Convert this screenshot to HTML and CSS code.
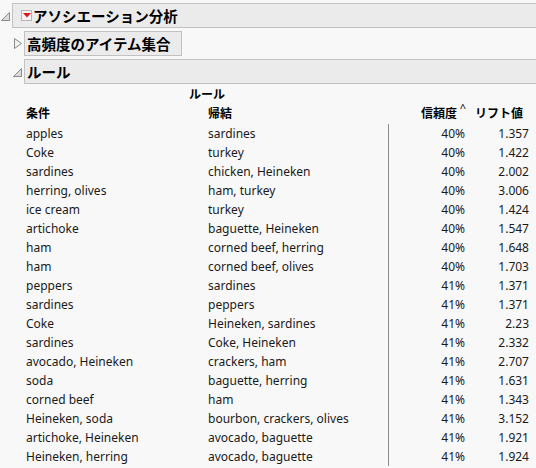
FILE: index.html
```html
<!DOCTYPE html>
<html lang="ja">
<head>
<meta charset="utf-8">
<link rel="stylesheet" href="styles.css">
</head>
<body>
<div class="report">
  <div class="ol-row">
    <svg class="tri" width="10" height="9" viewBox="0 0 10 9"><polygon points="8.5,0.5 8.5,8.5 0.5,8.5" fill="#dcdcdc" stroke="#8a8a8a" stroke-width="1"/></svg>
    <div class="ol-head full">
      <span class="menu-btn"><svg width="8" height="5" viewBox="0 0 8 5"><polygon points="0,0 8,0 4,4.5" fill="#e0141e"/></svg></span>
      <span class="title">アソシエーション分析</span>
    </div>
  </div>
  <div class="ol-body">
    <div class="ol-row">
      <svg class="tri closed" width="10" height="11" viewBox="0 0 10 11"><polygon points="1.5,0.5 8.5,5.5 1.5,10.5" fill="#f2f2f2" stroke="#8a8a8a" stroke-width="1"/></svg>
      <div class="ol-head">
        <span class="title">高頻度のアイテム集合</span>
      </div>
    </div>
    <div class="ol-row last">
      <svg class="tri" width="10" height="9" viewBox="0 0 10 9"><polygon points="8.5,0.5 8.5,8.5 0.5,8.5" fill="#dcdcdc" stroke="#8a8a8a" stroke-width="1"/></svg>
      <div class="ol-head full">
        <span class="title">ルール</span>
      </div>
    </div>
    <div class="table">
      <div class="group">ルール</div>
      <div class="h c1">条件</div>
      <div class="h c2">帰結</div>
      <div class="h c3">信頼度<span class="caret">^</span></div>
      <div class="h c4">リフト値</div>

      <div class="c1">apples</div><div class="c2">sardines</div><div class="c3 n">40%</div><div class="c4 n">1.357</div>
      <div class="c1">Coke</div><div class="c2">turkey</div><div class="c3 n">40%</div><div class="c4 n">1.422</div>
      <div class="c1">sardines</div><div class="c2">chicken, Heineken</div><div class="c3 n">40%</div><div class="c4 n">2.002</div>
      <div class="c1">herring, olives</div><div class="c2">ham, turkey</div><div class="c3 n">40%</div><div class="c4 n">3.006</div>
      <div class="c1">ice cream</div><div class="c2">turkey</div><div class="c3 n">40%</div><div class="c4 n">1.424</div>
      <div class="c1">artichoke</div><div class="c2">baguette, Heineken</div><div class="c3 n">40%</div><div class="c4 n">1.547</div>
      <div class="c1">ham</div><div class="c2">corned beef, herring</div><div class="c3 n">40%</div><div class="c4 n">1.648</div>
      <div class="c1">ham</div><div class="c2">corned beef, olives</div><div class="c3 n">40%</div><div class="c4 n">1.703</div>
      <div class="c1">peppers</div><div class="c2">sardines</div><div class="c3 n">41%</div><div class="c4 n">1.371</div>
      <div class="c1">sardines</div><div class="c2">peppers</div><div class="c3 n">41%</div><div class="c4 n">1.371</div>
      <div class="c1">Coke</div><div class="c2">Heineken, sardines</div><div class="c3 n">41%</div><div class="c4 n">2.23</div>
      <div class="c1">sardines</div><div class="c2">Coke, Heineken</div><div class="c3 n">41%</div><div class="c4 n">2.332</div>
      <div class="c1">avocado, Heineken</div><div class="c2">crackers, ham</div><div class="c3 n">41%</div><div class="c4 n">2.707</div>
      <div class="c1">soda</div><div class="c2">baguette, herring</div><div class="c3 n">41%</div><div class="c4 n">1.631</div>
      <div class="c1">corned beef</div><div class="c2">ham</div><div class="c3 n">41%</div><div class="c4 n">1.343</div>
      <div class="c1">Heineken, soda</div><div class="c2">bourbon, crackers, olives</div><div class="c3 n">41%</div><div class="c4 n">3.152</div>
      <div class="c1">artichoke, Heineken</div><div class="c2">avocado, baguette</div><div class="c3 n">41%</div><div class="c4 n">1.921</div>
      <div class="c1">Heineken, herring</div><div class="c2">avocado, baguette</div><div class="c3 n">41%</div><div class="c4 n">1.924</div>
    </div>
  </div>
</div>
</body>
</html>
```

FILE: styles.css
```css
html, body {
  margin: 0;
  padding: 0;
  background: #f8f8f8;
  overflow: hidden;
}
body {
  font-family: "Noto Sans", "Noto Sans CJK JP", sans-serif;
  font-size: 12px;
  color: #1a1a1a;
  width: 536px;
  height: 468px;
}
.report {
  padding-top: 3px;
}
.ol-row {
  display: flex;
  align-items: center;
  height: 25px;
  margin-bottom: 3px;
}
.ol-row.last {
  margin-bottom: 0;
}
.tri {
  flex: none;
  width: 10px;
  margin-left: 1px;
  margin-right: 1px;
  align-self: center;
  position: relative;
  top: 1px;
}
.tri.closed {
  top: 0;
}
.ol-head {
  height: 23px;
  border: 1px solid #c2c2c2;
  background: #ebebeb;
  display: flex;
  align-items: center;
  padding: 0 10px 0 2px;
}
.ol-head.full {
  flex: 1;
  border-right: none;
}
.title {
  font-family: "Noto Sans CJK JP", sans-serif;
  font-weight: bold;
  font-size: 14.5px;
  color: #000;
}
.menu-btn {
  width: 9px;
  height: 9px;
  border: 1px solid #b4b4b4;
  background: #f4f4f4;
  display: flex;
  align-items: center;
  justify-content: center;
  margin-left: 6px;
  margin-right: 1px;
}
.ol-body {
  padding-left: 12px;
}
.table {
  display: grid;
  grid-template-columns: 182px 180px 77px 64px;
  grid-template-rows: 19px 21px;
  grid-auto-rows: 19px;
  padding-left: 14px;
  align-items: center;
}
.table > div {
  height: 19px;
  line-height: 19px;
  white-space: nowrap;
}
.c1 { grid-column: 1; }
.c2 { grid-column: 2; }
.c3 { grid-column: 3; }
.c4 { grid-column: 4; }
.group {
  grid-column: 1 / 3;
  text-align: center;
  font-family: "Noto Sans CJK JP", sans-serif;
  font-weight: bold;
  color: #000;
}
.table > .h {
  font-family: "Noto Sans CJK JP", sans-serif;
  font-weight: bold;
  color: #000;
  height: 21px;
  line-height: 19px;
}
.h.c3 {
  text-align: right;
}
.h.c4 {
  text-align: right;
  padding-right: 6px;
}
.caret {
  display: inline-block;
  font-family: "Noto Sans", sans-serif;
  font-weight: normal;
  font-size: 11px;
  width: 12px;
  text-align: center;
  position: relative;
  top: -6px;
  margin-right: -4px;
}
.c3.n {
  border-left: 1px solid #8c8c8c;
  text-align: right;
}
.c4.n {
  text-align: right;
}
```
